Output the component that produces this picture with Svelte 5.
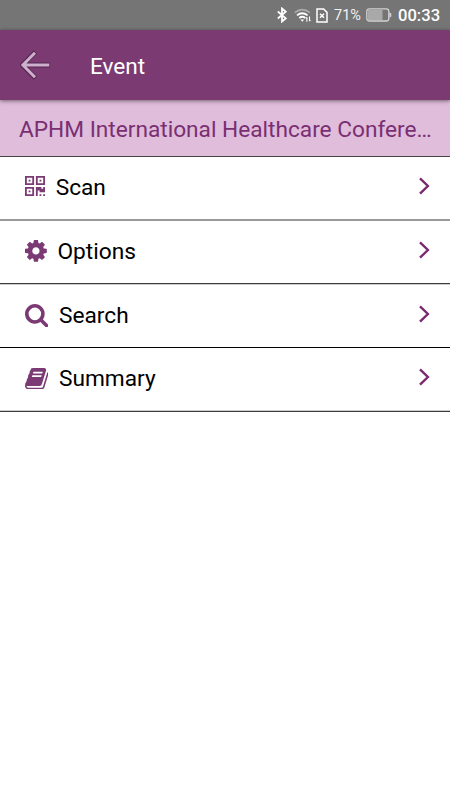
<script>
  const items = [
    { label: 'Scan', w: 20, h: 20, box: '0 0 11 11', d: 'M0 0h5v5H0zM1 1v3h3V1zM2 2h1v1H2zM6 0h5v5H6zM7 1v3h3V1zM8 2h1v1H8zM0 6h5v5H0zM1 7v3h3V7zM2 8h1v1H2zM11 6v3H8V8H7v3H6V6h3v1h1V6zM8 10h1v1H8zM10 10h1v1h-1z' },
    { label: 'Options', w: 21.8, h: 21.8, box: '128 128 1536 1536', d: 'M1152 896q0-106-75-181t-181-75-181 75-75 181 75 181 181 75 181-75 75-181zm512-109v222q0 12-8 23t-20 13l-185 28q-19 54-39 91 35 50 107 138 10 12 10 25t-9 23q-27 37-99 108t-94 71q-12 0-26-9l-138-108q-44 23-91 38-16 136-29 186-7 28-36 28h-222q-14 0-24.5-8.5t-11.5-21.5l-28-184q-49-16-90-37l-141 107q-10 9-25 9-14 0-25-11-126-114-165-168-7-10-7-23 0-12 8-23 15-21 51-66.5t54-70.5q-27-50-41-99l-183-27q-13-2-21-12.5t-8-23.5v-222q0-12 8-23t19-13l186-28q14-46 39-92-40-57-107-138-10-12-10-24 0-10 9-23 26-36 98.5-107.5t94.5-71.5q13 0 26 10l138 107q44-23 91-38 16-136 29-186 7-28 36-28h222q14 0 24.5 8.5t11.5 21.5l28 184q49 16 90 37l142-107q9-9 24-9 13 0 25 10 129 119 165 170 7 8 7 22 0 12-8 23-15 21-51 66.5t-54 70.5q26 50 41 98l183 28q13 2 21 12.5t8 23.5z' },
    { label: 'Search', w: 23.3, h: 23.3, box: '64 128 1664 1664', d: 'M1216 832q0-185-131.5-316.5t-316.5-131.5-316.5 131.5-131.5 316.5 131.5 316.5 316.5 131.5 316.5-131.5 131.5-316.5zm512 832q0 52-38 90t-90 38q-54 0-90-38l-343-342q-179 124-399 124-143 0-273.5-55.5t-225-150-150-225-55.5-273.5 55.5-273.5 150-225 225-150 273.5-55.5 273.5 55.5 225 150 150 225 55.5 273.5q0 220-124 399l343 343q37 37 37 90z' },
    { label: 'Summary', w: 23.3, h: 21.6, box: '64 128 1664 1536', d: 'M1703 478q40 57 18 129l-275 906q-19 64-76.5 107.5t-122.5 43.5h-923q-77 0-148.5-53.5t-99.5-131.5q-24-67-2-127 0-4 3-27t4-37q1-8-3-21.5t-3-19.5q2-11 8-21t16.5-23.5 16.5-23.5q23-38 45-91.5t30-91.5q3-10 .5-30t-.5-28q3-11 17-28t17-23q21-36 42-92t25-90q1-9-2.5-32t.5-28q4-13 22-30.5t22-22.5q19-26 42.5-84.5t27.5-96.5q1-8-3-25.5t-2-26.5q2-8 9-18t18-23 17-21q8-12 16.5-30.5t15-35 16-36 19.5-32 26.5-23.5 36-11.5 47.5 5.5l-1 3q38-9 51-9h761q74 0 114 56t18 130l-274 906q-36 119-71.5 153.5t-128.5 34.5h-869q-27 0-38 15-11 16-1 43 24 70 144 70h923q29 0 56-15.5t35-41.5l300-987q7-22 5-57 38 15 59 43zm-1064 2q-4 13 2 22.5t20 9.5h608q13 0 25.5-9.5t16.5-22.5l21-64q4-13-2-22.5t-20-9.5h-608q-13 0-25.5 9.5t-16.5 22.5zm-83 256q-4 13 2 22.5t20 9.5h608q13 0 25.5-9.5t16.5-22.5l21-64q4-13-2-22.5t-20-9.5h-608q-13 0-25.5 9.5t-16.5 22.5z' },
  ];
</script>

<div class="screen">
  <div class="status">
    <svg class="bt" width="10" height="16" viewBox="0 0 10 16" fill="none" stroke="#fff" stroke-width="1.8"><path d="M.8 4.5l8 6.8L5 14.5v-13l3.8 3.2-8 6.8" /></svg>
    <svg class="wifi" width="18" height="15" viewBox="0 0 18 15" fill="none" stroke="#fff" stroke-width="1.8"><path d="M.8 4.6Q8.2-1.3 15.8 4.6" opacity=".4" /><path d="M3 7.4q5.2-4.2 10.6 0M5.3 10q3-2.4 6 0" /><path d="M6.4 11.4h3.8l-1.9 2.4z" fill="#fff" stroke="none" /><path d="M12.9 9.3v4.4M15.5 8.5v4.6M11.9 10.5l1-1M15.5 13.2l1-1" stroke-width="1.1" /></svg>
    <svg class="sim" width="12" height="15" viewBox="0 0 12 15" fill="none" stroke="#fff" stroke-width="1.5"><path d="M1 1h6.6L11 4.4V14H1z" /><path d="M4 5.8l4 4M8 5.8l-4 4" /></svg>
    <span class="pct">71%</span>
    <svg class="battery" width="26" height="14" viewBox="0 0 26 14"><rect x="2" y="2" width="14.5" height="10" fill="#a9a9a9" /><rect x=".8" y=".8" width="22" height="12.2" rx="2.5" fill="none" stroke="#d2d2d2" stroke-width="1.3" /><path d="M23.3 4.3l2 1.2v3l-2 1.2" fill="#d2d2d2" /></svg>
    <span class="time">00:33</span>
  </div>
  <header>
    <svg width="32" height="30" viewBox="0 0 32 30" fill="none"><path d="M15.5 2L2.5 15l13 13M3.5 15H30" stroke="#532650" stroke-width="4.8" /><path d="M15 2.8L2.9 15 15 27.2M4 15h25.3" stroke="#cfb0cc" stroke-width="3" /></svg>
    <h1>Event</h1>
  </header>
  <div class="title"><span>APHM International Healthcare Confere…</span></div>
  <nav>
    {#each items as item}
      <div class="row">
        <svg class="icon" width={item.w} height={item.h} viewBox={item.box} fill="#7b3a73" fill-rule="evenodd"><path d={item.d} /></svg>
        <span class="label">{item.label}</span>
        <svg class="chevron" width="12" height="18" viewBox="0 0 12 18" fill="none" stroke="#7a2b70" stroke-width="2.4"><path d="M2 1.3L9.9 9 2 16.7" /></svg>
      </div>
    {/each}
  </nav>
</div>

<style>
  :global(body) { background: #fff; }
  .screen { width: 450px; height: 800px; overflow: hidden; background: #fff; font-family: Roboto, sans-serif; color: #000; }
  .status { display: flex; align-items: center; height: 30px; box-sizing: border-box; padding-left: 277px; background: #757575; color: #fff; }
  .status svg, .status span { flex: none; }
  .wifi { margin-left: 7px; }
  .sim { margin-left: 4px; }
  .pct { margin: 2px 0 0 6px; width: 27px; font-size: 14.5px; line-height: 30px; color: #f2f2f2; white-space: nowrap; }
  .battery { margin-left: 5px; }
  .time { margin-left: 6px; font-size: 16.6px; font-weight: 500; line-height: 30px; padding-top: 1px; }
  header { position: relative; display: flex; align-items: center; height: 70px; box-sizing: border-box; padding: 0 20px; background: #7b3b72; box-shadow: 0 1px 4px rgba(0, 0, 0, .5); }
  h1 { margin: 4px 0 0 38px; font-size: 22.6px; font-weight: 400; line-height: 30px; color: #fff; }
  .title { display: flex; align-items: center; height: 57px; box-sizing: border-box; border-bottom: 1px solid #444; padding: 2px 0 0 19px; background: #dfbddb; color: #7a2f72; font-size: 22.67px; white-space: nowrap; }
  .row { display: flex; align-items: center; height: 64px; box-sizing: border-box; padding: 0 20px 4px 25px; }
  .row:nth-child(1) { box-shadow: inset 0 -2px #999; }
  .row:nth-child(2) { box-shadow: inset 0 -1px #ccc, inset 0 -2px #3c3c3c; }
  .row:nth-child(3) { height: 63px; padding-bottom: 3px; box-shadow: inset 0 -1px #000; }
  .row:nth-child(4) { box-shadow: inset 0 -1px #3c3c3c, inset 0 -2px #ccc; }
  .row svg { flex: none; }
  .row:nth-child(1) .icon { margin-bottom: 1.4px; }
  .row:nth-child(3) .icon { margin-top: 1px; }
  .row:nth-child(4) .icon { margin-top: 1px; }
  .chevron { margin-bottom: 2.2px; }
  .label { flex: 1; margin: 2px 0 0 10.7px; font-size: 22.7px; line-height: 30px; }
</style>
